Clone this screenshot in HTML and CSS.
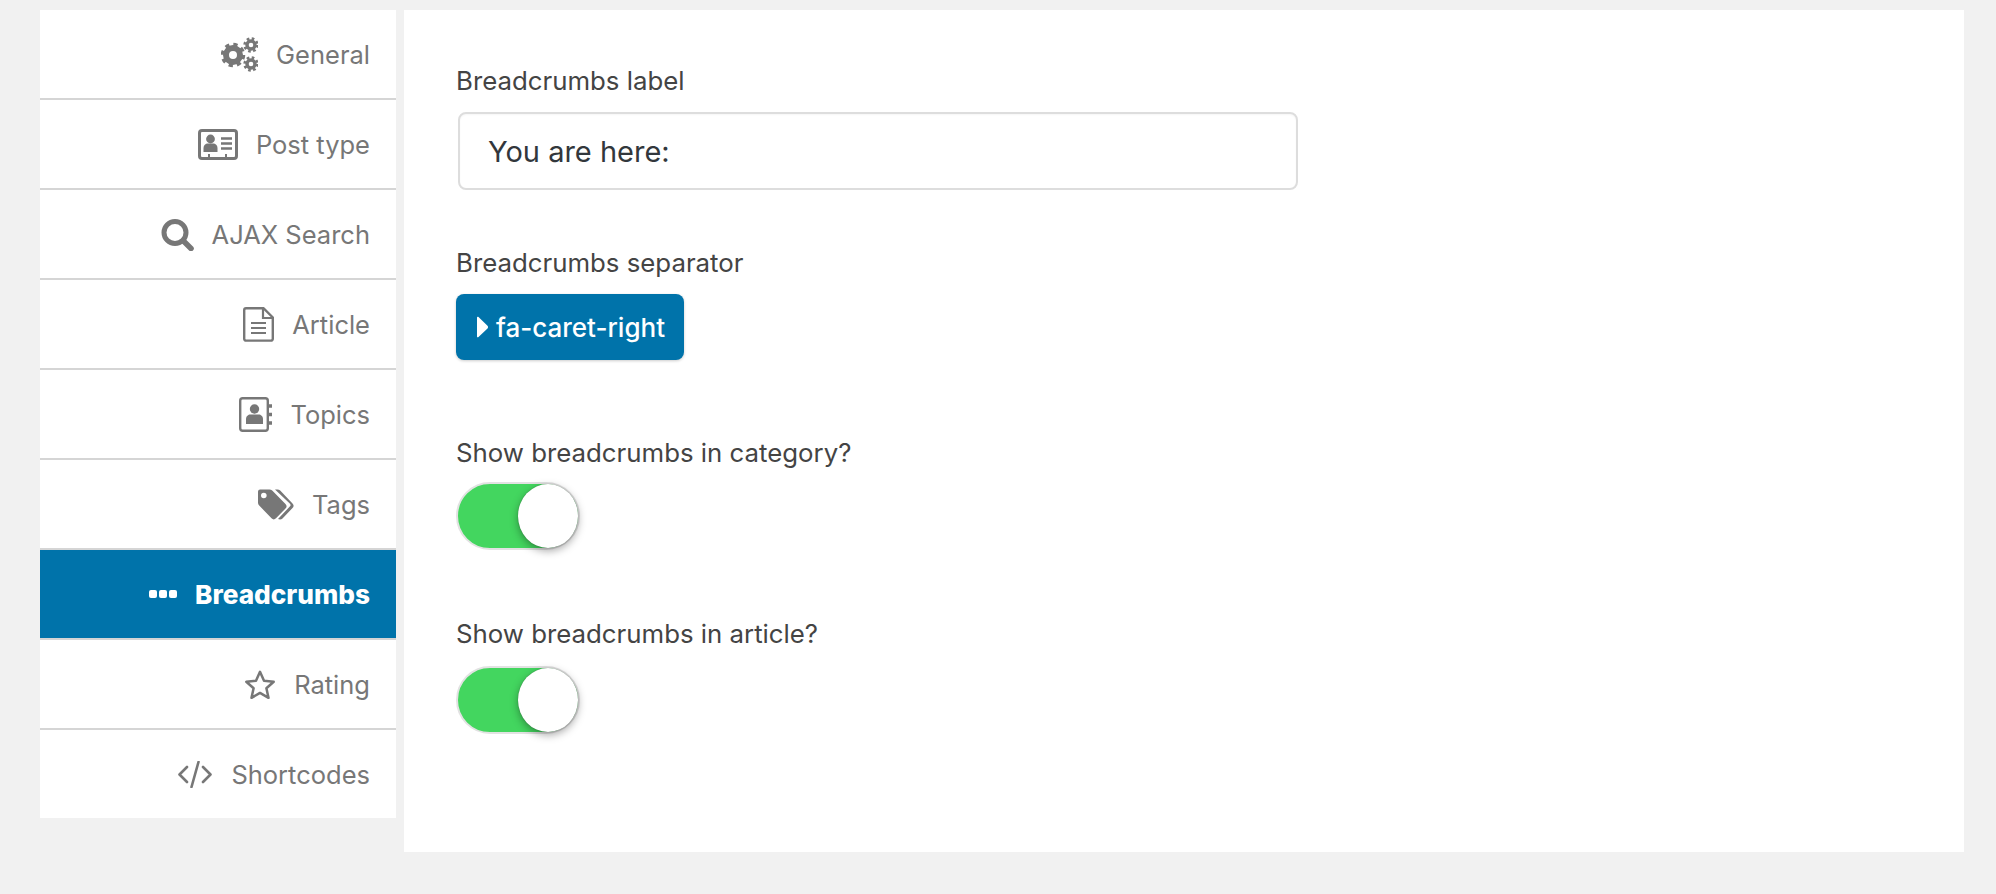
FILE: index.html
```html
<!DOCTYPE html>
<html lang="en">
<head>
<meta charset="utf-8">
<title>Breadcrumbs settings</title>
<link rel="stylesheet" href="styles.css">
</head>
<body>
<div class="page">
  <nav class="side">
    <a class="item"><svg class="ico" width="37" height="35" viewBox="0 0 37 35"><g fill="none" stroke="#777"><circle cx="12" cy="18" r="7" stroke-width="6"/><circle cx="12" cy="18" r="10.5" stroke-width="3.5" stroke-dasharray="4.2 4.05"/><circle cx="30" cy="8" r="4" stroke-width="3.4"/><circle cx="30" cy="8" r="6.4" stroke-width="2.6" stroke-dasharray="2.6 2.42"/><circle cx="30" cy="27" r="4" stroke-width="3.4"/><circle cx="30" cy="27" r="6.4" stroke-width="2.6" stroke-dasharray="2.6 2.42"/></g></svg><span>General</span></a>
    <a class="item"><svg class="ico" width="40" height="31" viewBox="0 0 40 31"><rect x="1.5" y="1.5" width="37" height="28" rx="2.5" fill="none" stroke="#777" stroke-width="3"/><circle cx="12.5" cy="10" r="4.4" fill="#777"/><path d="M5.5 23v-4c0-3 2.2-4.600 4-4.600h6c1.800 0 4 1.600 4 4.600v4z" fill="#777"/><path d="M23 9.500h11M23 14.500h11M23 19.500h11" stroke="#777" stroke-width="2.600"/><path d="M11 25v3M28 25v3" stroke="#777" stroke-width="2"/></svg><span>Post type</span></a>
    <a class="item"><svg class="ico" width="33" height="33" viewBox="0 0 33 33"><circle cx="14" cy="14.500" r="11" fill="none" stroke="#777" stroke-width="5"/><path d="M22.500 23l7.500 7.500" stroke="#777" stroke-width="5.500" stroke-linecap="round"/></svg><span>AJAX Search</span></a>
    <a class="item"><svg class="ico" width="31" height="35" viewBox="0 0 31 35"><path d="M1.200 3a1.800 1.800 0 0 1 1.800-1.800h17.500l9.300 9.300v21.300a1.800 1.800 0 0 1-1.800 1.800H3a1.800 1.800 0 0 1-1.800-1.800z" fill="none" stroke="#777" stroke-width="2.400"/><path d="M20 1.500v9.500h9.500" fill="none" stroke="#777" stroke-width="2.200"/><path d="M8 16h15M8 21h15M8 26h15" stroke="#777" stroke-width="2.200"/></svg><span>Article</span></a>
    <a class="item"><svg class="ico" width="33" height="35" viewBox="0 0 33 35"><rect x="1.200" y="1.200" width="27.600" height="32.600" rx="2.500" fill="none" stroke="#777" stroke-width="2.400"/><circle cx="15.500" cy="12" r="4.700" fill="#777"/><path d="M7 27v-5c0-3 2.500-4.500 4-4.500h9c1.500 0 4 1.500 4 4.500v5z" fill="#777"/><path d="M29 9h4M29 17.500h4M29 26h4" stroke="#777" stroke-width="3.500"/></svg><span>Topics</span></a>
    <a class="item"><svg class="ico" width="37" height="31" viewBox="0 0 37 31"><path d="M1 2.500A2.200 2.200 0 0 1 3 .5h9.500c1 0 2 .4 2.700 1.100L28.500 15a3.200 3.200 0 0 1 0 4.500l-9.500 9.800a3.200 3.200 0 0 1-4.500 0L2.200 16.500A4 4 0 0 1 1 13.700z" fill="#777"/><circle cx="6.800" cy="6.500" r="2.800" fill="#fff"/><path d="M18 .5h2.500c1 0 2 .4 2.700 1.100L35.500 14.500a3.200 3.200 0 0 1 0 4.500l-10 10.500c-1 1-2.800 1.300-4.500.5l12-12.700c.8-.8.800-1.800 0-2.600z" fill="#777"/></svg><span>Tags</span></a>
    <a class="item active"><svg class="ico" width="28" height="10" viewBox="0 0 28 10"><rect x="0" y="1" width="8" height="8" rx="2" fill="#fff"/><rect x="10" y="1" width="8" height="8" rx="2" fill="#fff"/><rect x="20" y="1" width="8" height="8" rx="2" fill="#fff"/></svg><span>Breadcrumbs</span></a>
    <a class="item"><svg class="ico" width="32" height="31" viewBox="0 0 32 31"><path d="M16 2.800l4 9 9.700 1-7.300 6.500 2.100 9.500-8.500-4.900-8.500 4.900 2.100-9.500-7.300-6.500 9.700-1z" fill="none" stroke="#777" stroke-width="2.500" stroke-linejoin="round"/></svg><span>Rating</span></a>
    <a class="item"><svg class="ico" width="36" height="27" viewBox="0 0 36 27"><path d="M10 6L2.500 13.500 10 21M26 6l7.500 7.500L26 21M21.500 1L14.500 26" fill="none" stroke="#777" stroke-width="2.600" stroke-linecap="round" stroke-linejoin="round"/></svg><span>Shortcodes</span></a>
  </nav>
  <main class="panel">
    <section class="field field-label">
      <label class="lbl">Breadcrumbs label</label>
      <div class="input">You are here:</div>
    </section>
    <section class="field field-sep">
      <label class="lbl">Breadcrumbs separator</label>
      <button class="btn"><svg width="12" height="22" viewBox="0 0 12 22"><path d="M1 1.500v19c0 1 1 1 1.500.5l9-8.500c.7-.7.7-2 0-2.700l-9-8.800C2 .500 1 .500 1 1.500z" fill="#fff"/></svg><span>fa-caret-right</span></button>
    </section>
    <section class="field field-show1">
      <label class="lbl">Show breadcrumbs in category?</label>
      <div class="toggle"><div class="knob"></div></div>
    </section>
    <section class="field field-show2">
      <label class="lbl">Show breadcrumbs in article?</label>
      <div class="toggle"><div class="knob"></div></div>
    </section>
  </main>
</div>
</body>
</html>
```
FILE: styles.css
```css
* { box-sizing: border-box; }
html, body { margin: 0; height: 100%; }
body { background: #f1f1f1; font-family: Inter, "Noto Sans", sans-serif; overflow: hidden; }
.page { display: flex; gap: 8px; padding: 10px 32px 42px 40px; height: 894px; align-items: flex-start; }
.side { width: 356px; background: #fff; display: flex; flex-direction: column; flex: none; }
.item { height: 90px; border-bottom: 2px solid #d5d5d5; display: flex; align-items: center; justify-content: flex-end; gap: 18px; padding-right: 26px; color: #777; font-size: 25.5px; }
.item:last-child { height: 88px; border-bottom: 0; }
.item.active { background: #0073aa; color: #fff; font-size: 26.2px; font-weight: 800; }
.ico { flex: none; }
.panel { flex: 1; height: 842px; background: #fff; padding: 0 52px; }
.field { display: flex; flex-direction: column; align-items: flex-start; }
.field-label { padding-top: 55px; }
.field-sep { padding-top: 57px; }
.field-show1 { padding-top: 77px; }
.field-show2 { padding-top: 68px; }
.lbl { display: block; font-size: 25.8px; line-height: 32px; color: #444; height: 32px; }
.input { width: 840px; height: 78px; margin: 15px 0 0 2px; border: 2px solid #ddd; border-radius: 8px; padding-left: 28px; display: flex; align-items: center; font-size: 29px; color: #32373c; box-shadow: inset 0 1px 2px rgba(0,0,0,.04); }
.btn { width: 228px; height: 66px; margin-top: 15px; border: 0; border-radius: 8px; background: #0073aa; color: #fff; font: 500 26px Inter, "Noto Sans", sans-serif; display: flex; align-items: center; gap: 8px; padding: 0 0 0 20px; box-shadow: 0 1px 3px rgba(0,0,0,.2); }
.toggle { position: relative; width: 124px; height: 68px; margin-top: 13px; border: 2px solid #e2e2e2; border-radius: 34px; background: #43d65f; }
.field-show2 .toggle { margin-top: 16px; }
.knob { position: absolute; right: 0; top: 0; width: 60px; height: 64px; border-radius: 50%; background: #fff; box-shadow: 0 3px 8px rgba(0,0,0,.35), 0 0 1px rgba(0,0,0,.4); }
```
